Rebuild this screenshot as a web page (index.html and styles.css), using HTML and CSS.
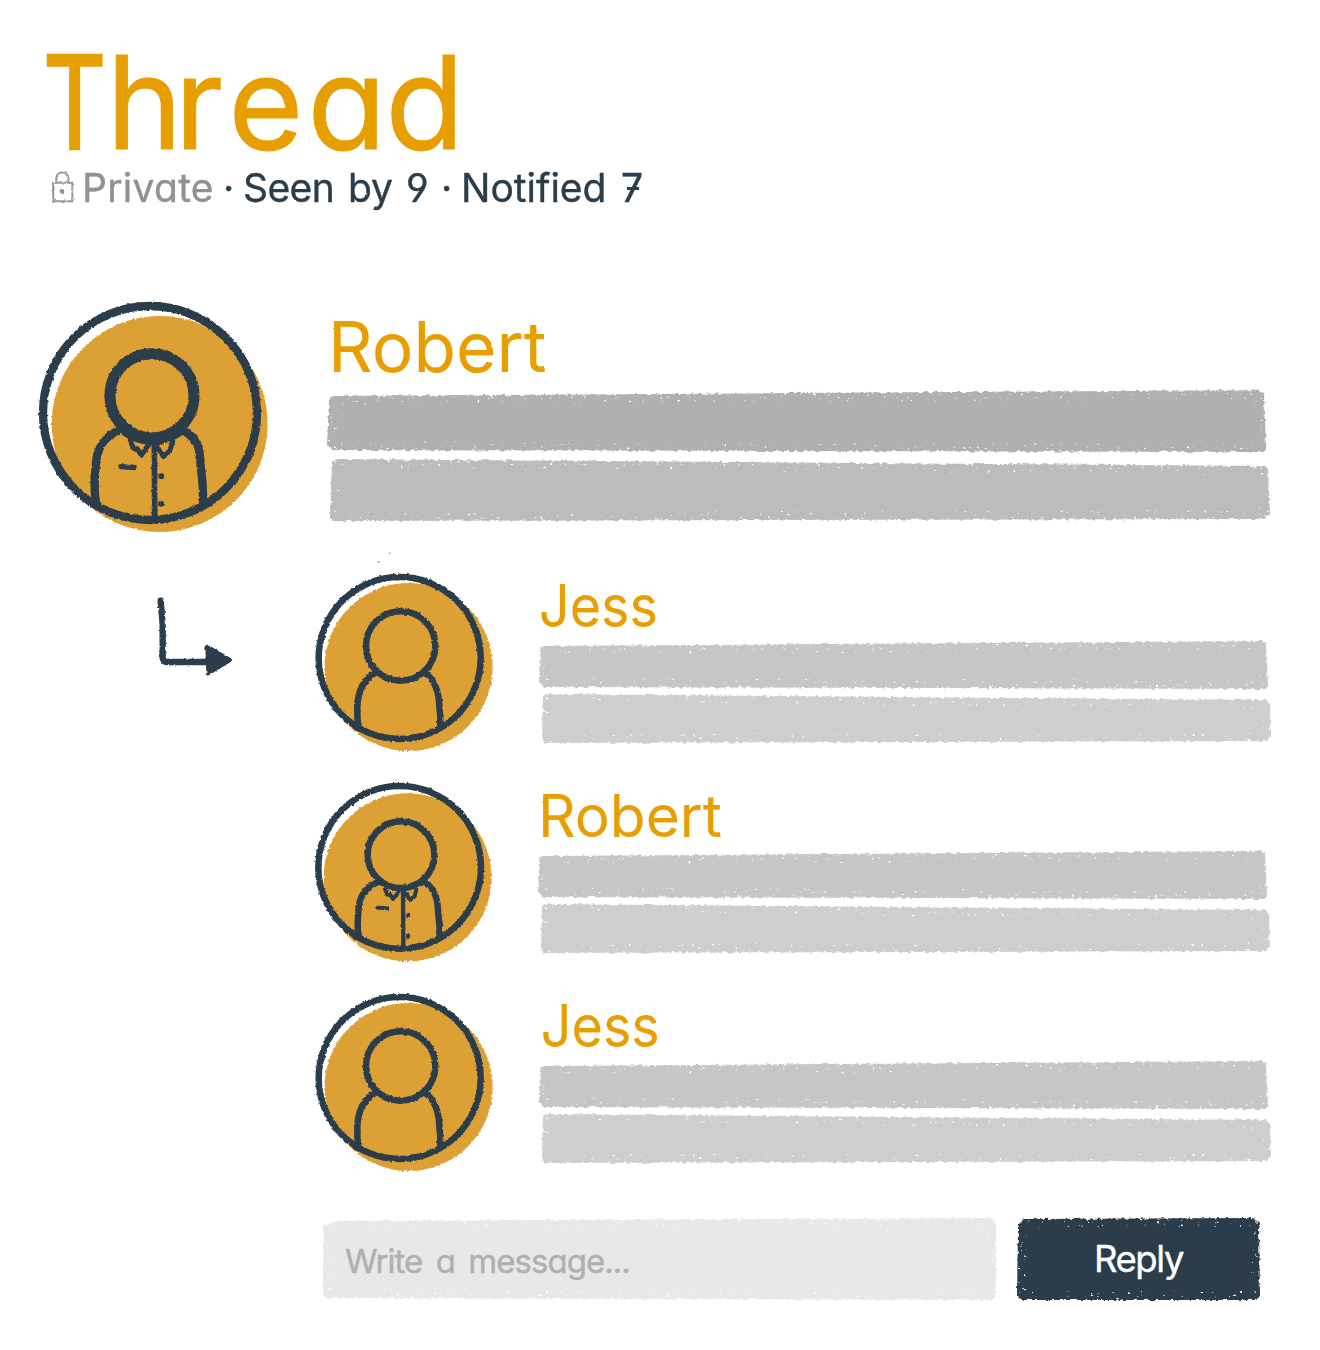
FILE: index.html
```html
<!DOCTYPE html>
<html lang="en">
<head>
<meta charset="utf-8">
<title>Thread</title>
<link rel="stylesheet" href="styles.css">
</head>
<body>
<svg class="defs" width="0" height="0" aria-hidden="true">
  <defs>
    <filter id="chalk" x="-5%" y="-10%" width="110%" height="120%" color-interpolation-filters="sRGB">
      <feTurbulence type="fractalNoise" baseFrequency="0.25" numOctaves="3" seed="4" result="noise"/>
      <feDisplacementMap in="SourceGraphic" in2="noise" scale="4" xChannelSelector="R" yChannelSelector="G" result="rough"/>
      <feMorphology in="rough" operator="erode" radius="8" result="core"/>
      <feTurbulence type="fractalNoise" baseFrequency="0.3" numOctaves="2" seed="11" result="grain"/>
      <feColorMatrix in="grain" type="matrix" values="0 0 0 0 0  0 0 0 0 0  0 0 0 0 0  10 0 0 0 -7.1" result="specks"/>
      <feComposite in="rough" in2="specks" operator="out" result="pitted"/>
      <feMerge><feMergeNode in="pitted"/><feMergeNode in="core"/></feMerge>
    </filter>
    <filter id="ink" x="-5%" y="-5%" width="110%" height="110%" color-interpolation-filters="sRGB">
      <feTurbulence type="fractalNoise" baseFrequency="0.35" numOctaves="2" seed="7" result="noise"/>
      <feDisplacementMap in="SourceGraphic" in2="noise" scale="2.8" xChannelSelector="R" yChannelSelector="G"/>
    </filter>
    <filter id="print" x="-5%" y="-10%" width="110%" height="120%" color-interpolation-filters="sRGB">
      <feTurbulence type="fractalNoise" baseFrequency="0.1" numOctaves="2" seed="2" result="noise"/>
      <feDisplacementMap in="SourceGraphic" in2="noise" scale="1.5" xChannelSelector="R" yChannelSelector="G"/>
    </filter>
    <symbol id="jess" viewBox="0 0 570 630">
      <circle class="disc" cx="296" cy="321" r="252"/>
      <g class="lines-sm">
        <circle cx="269" cy="294" r="243"/>
        <circle cx="272" cy="258" r="104"/>
        <path d="M197 338C158 360 143 400 142 440Q141 475 145 505M344 338C378 362 387 402 388 440Q392 470 391 503"/>
      </g>
    </symbol>
    <symbol id="robert" viewBox="0 0 570 630">
      <circle class="disc" cx="293" cy="322" r="252"/>
      <g class="lines-sm">
        <circle cx="269" cy="292" r="244"/>
        <circle cx="273" cy="254" r="100"/>
        <path d="M205 336C160 353 146 385 145 425Q141 465 145 500M342 336C377 356 384 390 384 425Q390 465 389 500"/>
        <path class="seam" d="M279 355L280 530"/>
        <path class="collar" d="M225 357L232 374L240 373L249 387L266 366M284 365L301 390L314 379L319 358"/>
        <path class="pocket" d="M203 413L232 415"/>
      </g>
      <circle class="dot" cx="295" cy="435" r="7"/><circle class="dot" cx="294" cy="498" r="7"/>
    </symbol>
  </defs>
</svg>

<main class="page">
  <header class="header">
    <h1 class="title"><span class="t">T</span><span>h</span><span class="r">r</span><span class="e">e</span><span class="a">a</span><span class="d">d</span></h1>
    <div class="meta">
      <svg class="lock" viewBox="63 390 72 102" aria-hidden="true"><path d="M69 428H127V484H70ZM79 426V413C80 392 114 392 115 413V426"/><circle cx="96" cy="454" r="7"/></svg>
      <span class="word private">Private</span>
      <span class="word sep">·</span>
      <span class="word seen">Seen</span>
      <span class="word by">by</span>
      <span class="word nine">9</span>
      <span class="word sep">·</span>
      <span class="word notified">Notified</span>
      <span class="word seven">7</span>
    </div>
  </header>

  <article class="comment root">
    <svg class="avatar-lg" viewBox="0 0 750 750" aria-hidden="true">
      <circle class="disc" cx="389" cy="402" r="324"/>
      <g class="lines-lg">
        <circle cx="360" cy="369" r="321"/>
        <circle class="head" cx="366" cy="317" r="126"/>
        <path class="chin" d="M278 419Q365 482 455 420"/>
        <path d="M272 418C217 440 199 480 197 530Q190 590 198 640M458 420C505 445 511 480 512 530Q520 585 519 635"/>
        <path class="seam" d="M373 450L374 690"/>
        <path class="collar" d="M301 452L311 476L322 476L334 496L355 465M378 465L400 499L420 480L428 455"/>
        <path class="pocket" d="M274 530L312 533"/>
      </g>
      <circle class="dot" cx="394" cy="559" r="9"/><circle class="dot" cx="393" cy="641" r="9"/>
    </svg>
    <div class="body">
      <h2 class="name">Robert</h2>
      <div class="bars"><div class="bar first"></div><div class="bar second"></div></div>
    </div>
  </article>

  <section class="replies">
    <svg class="arrow" viewBox="-300 60 840 630" aria-hidden="true">
      <path class="shaft" d="M92 182L98 255L98 350Q98 366 112 366H240"/>
      <path class="tip" d="M232 320L300 360L235 400Z"/>
    </svg>
    <div class="list">
      <article class="comment reply">
        <svg class="avatar" viewBox="0 0 570 630" aria-hidden="true"><use href="#jess"/><path class="speck" d="M237 -20h6M205 4v4"/></svg>
        <div class="body"><h3 class="name jess">Jess</h3><div class="bars"><div class="bar first"></div><div class="bar second"></div></div></div>
      </article>
      <article class="comment reply shifted">
        <svg class="avatar" viewBox="0 0 570 630" aria-hidden="true"><use href="#robert"/></svg>
        <div class="body"><h3 class="name">Robert</h3><div class="bars"><div class="bar first"></div><div class="bar second"></div></div></div>
      </article>
      <article class="comment reply last">
        <svg class="avatar" viewBox="0 0 570 630" aria-hidden="true"><use href="#jess"/></svg>
        <div class="body"><h3 class="name jess">Jess</h3><div class="bars"><div class="bar first"></div><div class="bar second"></div></div></div>
      </article>
    </div>
  </section>

  <footer class="composer">
    <div class="control field"><div class="fill"></div><span class="placeholder">Write a message...</span></div>
    <div class="control button"><div class="fill"></div><span class="label">Reply</span></div>
  </footer>
</main>
</body>
</html>
```
FILE: styles.css
```css
* { box-sizing: border-box; }
body {
  margin: 0;
  background: #fff;
  color: #2b3d4b;
  font-family: Inter, "Open Sans", sans-serif;
  font-feature-settings: "cv11", "ss01", "calt" 0;
  line-height: 1;
}
h1, h2, h3 { margin: 0; font-weight: 400; white-space: nowrap; }
.defs { position: absolute; }
.page { width: 1320px; height: 1350px; overflow: hidden; padding-top: 38px; }

.header { height: 252px; padding-left: 43px; }
.title { height: 130px; font-size: 129px; color: #e79e00; filter: url(#print); -webkit-text-stroke: 0.8px #e79e00; }
.title span { display: inline-block; }
.title .t { transform: scaleX(0.76); transform-origin: left; margin-right: -20px; -webkit-text-stroke-width: 2.5px; }
.title .r { margin-left: -8px; }
.title .e { margin-left: 5px; }
.title .a { margin-left: 4px; }
.title .d { margin-left: -1px; }
.meta { display: flex; padding-left: 8px; font-size: 39px; filter: url(#print); -webkit-text-stroke: 0.4px; }
.lock { width: 24px; height: 34px; margin-top: 2px; flex: none; fill: none; stroke: #979797; stroke-width: 6; filter: url(#ink); }
.lock circle { fill: #919191; stroke: none; }
.word { flex: none; white-space: nowrap; }
.private { width: 141px; margin-left: 7px; color: #919191; letter-spacing: 0.3px; }
.sep { width: 20px; }
.seen { width: 105px; letter-spacing: -0.6px; }
.by { width: 58px; }
.nine { width: 35px; }
.notified { width: 160px; }
.seven { position: relative; }
.seven::after { content: ""; position: absolute; left: 6px; top: 19px; width: 12px; height: 3px; background: #2b3d4b; }

.comment { display: flex; }
.disc { fill: #dca035; }
.lines-lg, .lines-sm { fill: none; stroke: #2b3d4b; stroke-linecap: round; stroke-linejoin: round; }
.lines-lg { stroke-width: 25; }
.lines-sm { stroke-width: 19.5; }
.lines-lg .head { stroke-width: 33; }
.lines-lg .chin { stroke-width: 29; }
.lines-lg .seam { stroke-width: 17; }
.lines-lg .collar { stroke-width: 15; }
.lines-lg .pocket { stroke-width: 16; }
.lines-sm .seam { stroke-width: 13; }
.lines-sm .collar { stroke-width: 12; }
.lines-sm .pocket { stroke-width: 12; }
.dot { fill: #2b3d4b; }
.speck { stroke: #666; stroke-width: 3; }

.name { color: #e79e00; filter: url(#print); -webkit-text-stroke: 0.1px #e79e00; }
.bars { display: flex; flex-direction: column; justify-content: space-between; filter: url(#chalk); }

.root { height: 270px; padding-left: 30px; }
.avatar-lg { width: 250px; height: 250px; flex: none; filter: url(#ink); }
.root .body { width: 943px; margin-left: 47px; padding-top: 23px; }
.root .name { height: 77px; padding-left: 1px; font-size: 69.5px; }
.root .bars { height: 131px; }
.root .first { height: 62px; background: #b0b0b0; clip-path: polygon(5px 6px, 933px 0, 937px 3px, 939px 58px, 936px 62px, 6px 60px, 0 55px, 2px 9px); }
.root .second { height: 62px; background: #bcbcbc; clip-path: polygon(9px 0, 937px 7px, 941px 10px, 943px 55px, 937px 60px, 6px 62px, 3px 59px, 5px 3px); }

.replies { display: flex; padding-left: 30px; height: 630px; }
.arrow { width: 280px; height: 210px; flex: none; filter: url(#ink); }
.shaft { fill: none; stroke: #2b3d4b; stroke-width: 19; stroke-linecap: round; }
.tip { fill: #2b3d4b; stroke: #2b3d4b; stroke-width: 12; stroke-linejoin: round; }
.reply { height: 210px; }
.avatar { width: 190px; height: 210px; flex: none; overflow: visible; filter: url(#ink); }
.reply .body { width: 732px; margin-left: 39px; padding-top: 17px; }
.shifted .body { margin-left: 38px; }
.reply .name { height: 64px; font-size: 58.5px; }
.reply .jess { transform: scaleX(0.92); transform-origin: left; }
.last .jess { padding-left: 2px; }
.reply .bars { height: 102px; }
.reply .first { height: 48px; background: #c6c6c6; clip-path: polygon(4px 5px, 724px 0, 727px 3px, 729px 45px, 726px 48px, 6px 46px, 0 42px, 1px 8px); }
.reply .second { height: 49px; background: #cecece; clip-path: polygon(7px 0, 727px 6px, 731px 9px, 732px 44px, 728px 47px, 6px 49px, 3px 46px, 4px 3px); }

.composer { display: flex; gap: 21px; padding: 28px 0 0 323px; }
.control { display: grid; height: 82px; }
.control > * { grid-area: 1 / 1; }
.fill { filter: url(#chalk); }
.fill::before { content: ""; display: block; height: 82px; }
.field { width: 673px; }
.field .fill::before { background: #e8e8e8; clip-path: polygon(0 8px, 14px 3px, 667px 0, 673px 4px, 673px 78px, 668px 82px, 4px 80px, 0 76px); }
.placeholder { padding: 27px 0 0 22px; font-size: 33px; letter-spacing: -0.95px; word-spacing: 5px; color: #b0b0b0; -webkit-text-stroke: 0.4px; white-space: nowrap; z-index: 1; }
.button { width: 243px; }
.button .fill::before { background: #2b3d4b; clip-path: polygon(1px 7px, 7px 1px, 236px 0, 242px 6px, 243px 79px, 239px 82px, 5px 82px, 0 77px); }
.label { padding-top: 23px; font-size: 36.5px; text-align: center; color: #fff; letter-spacing: -1.4px; -webkit-text-stroke: 0.4px; z-index: 1; }
```
